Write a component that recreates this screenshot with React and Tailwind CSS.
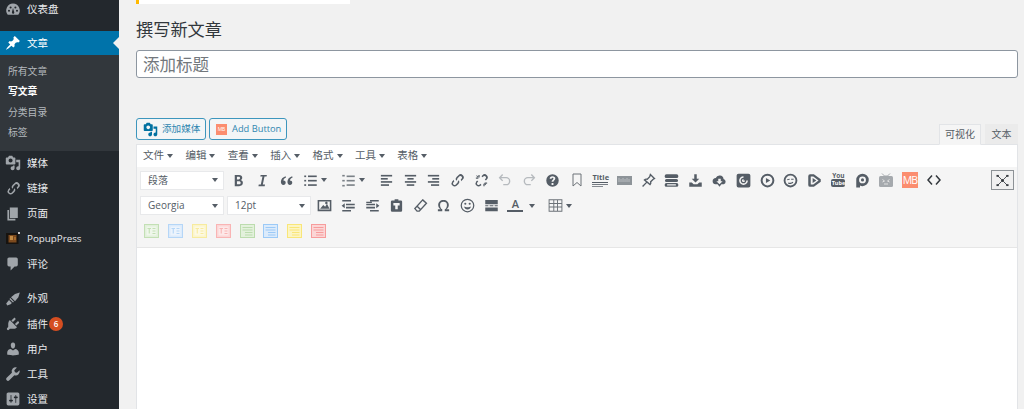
import React from "react";

const CJK = "font-['Open_Sans','Noto_Sans_CJK_SC',sans-serif]";

// small svg wrapper, 24 unit box
const Ico = ({ size = 15, box = 24, className = "", children }) => (
  <svg viewBox={`0 0 ${box} ${box}`} width={size} height={size} className={className} fill="currentColor">
    {children}
  </svg>
);

const Lines = ({ rows, w = 2.6 }) => (
  <g>
    {rows.map(([x1, x2, y], i) => (
      <rect key={i} x={x1} y={y} width={x2 - x1} height={w} />
    ))}
  </g>
);

const linkPath =
  "M20.500 3.500a5 5 0 0 0-7 0l-3 3a5 5 0 0 0-.8 6l1.800-1.800a2.500 2.500 0 0 1 .7-2.500l3-3a2.500 2.500 0 0 1 3.500 3.500l-1.500 1.500c.4 1 .5 2 .4 3l2.900-2.800a5 5 0 0 0 0-7zM14.300 11.400l-1.800 1.800a2.500 2.500 0 0 1-.7 2.500l-3 3a2.500 2.500 0 0 1-3.500-3.500l1.500-1.500a6 6 0 0 1-.4-3l-2.900 2.800a5 5 0 0 0 7 7l3-3a5 5 0 0 0 .8-6z";

const mediaPath =
  "M13 11V4c0-.55-.45-1-1-1h-1.670L9 1H5L3.670 3H2c-.55 0-1 .45-1 1v7c0 .55.45 1 1 1h10c.55 0 1-.45 1-1zM7 4.500c1.380 0 2.500 1.120 2.500 2.500S8.380 9.500 7 9.500 4.500 8.380 4.500 7 5.620 4.500 7 4.500zM14 6h5v10.500c0 1.380-1.120 2.500-2.500 2.500S14 17.880 14 16.500s1.120-2.500 2.500-2.500c.17 0 .34.02.5.050V9h-3V6zm-4 8.050V13h2v3.500c0 1.380-1.120 2.500-2.500 2.500S7 17.880 7 16.500 8.120 14 9.500 14c.17 0 .34.02.5.050z";

// dashicons style glyphs, 20 unit box
const sideIcons = {
  dash: (
    <path
      fillRule="evenodd"
      d="M10 2a8.500 8.500 0 0 0-6.600 13.800h13.200A8.500 8.500 0 0 0 10 2zM5 12.300a1.300 1.300 0 1 1 0-2.600 1.300 1.300 0 0 1 0 2.600zm2-4.200a1.300 1.300 0 1 1 0-2.600 1.300 1.300 0 0 1 0 2.600zm4.200 6.300a1.700 1.700 0 0 1-2.500-2L10 7.500l1.500 5a1.700 1.700 0 0 1-.3 1.900zM13 8.100a1.300 1.300 0 1 1 0-2.600 1.300 1.300 0 0 1 0 2.600zm2 4.200a1.300 1.300 0 1 1 0-2.600 1.300 1.300 0 0 1 0 2.600z"
    />
  ),
  pin: (
    <path d="M10.440 3.020l1.820-1.820 6.360 6.350-1.830 1.820c-1.050-.68-2.480-.57-3.410.36l-.75.750c-.92.930-1.040 2.350-.35 3.410l-1.830 1.820-2.410-2.410-2.800 2.790c-.42.42-3.380 2.710-3.800 2.290s1.860-3.390 2.280-3.810l2.790-2.790L4.100 9.360l1.830-1.820c1.050.69 2.480.57 3.400-.36l.75-.75c.93-.92 1.050-2.350.36-3.410z" />
  ),
  media: <path fillRule="evenodd" d={mediaPath} />,
  page: <path d="M6 15V2h10v13H6zm-1 1h8v2H3V5h2v11z" />,
  comment: <path d="M5 2h9c1.100 0 2 .9 2 2v7c0 1.100-.9 2-2 2h-2l-5 5v-5H5c-1.100 0-2-.9-2-2V4c0-1.100.9-2 2-2z" />,
  brush: <path d="M18.500 2l-6 1.700-5 4.200 5 5 4.200-5zM6.700 8.800l-1.200 1.200 4.500 4.500 1.200-1.200zM5 11.300l-3.500 4.200 1.300 2.500 4.200-1.300 1.600-1.600z" />,
  plugin: (
    <path d="M13.110 4.360L9.870 7.600 8 5.730l3.240-3.240c.35-.34 1.050-.2 1.560.32.52.51.66 1.210.31 1.550zm-8 1.770l.91-1.120 9.010 9.010-1.190.84c-.71.71-2.630 1.160-3.820 1.160H6.140L4.900 17.260c-.59.59-1.540.59-2.120 0-.59-.58-.59-1.530 0-2.120l1.240-1.240v-3.880c0-1.130.4-3.190 1.090-3.890zm7.260 3.970l3.240-3.240c.34-.35 1.040-.21 1.550.31.52.51.66 1.210.31 1.550l-3.240 3.250z" />
  ),
  user: (
    <path d="M10 9.250c-2.270 0-2.730-3.440-2.730-3.440C7 4.020 7.820 2 9.970 2c2.160 0 2.980 2.020 2.710 3.810 0 0-.41 3.440-2.680 3.440zm0 2.570L12.720 10c2.390 0 4.520 2.330 4.520 4.530v2.490s-3.650 1.130-7.240 1.130c-3.650 0-7.240-1.130-7.240-1.130v-2.490c0-2.250 1.940-4.480 4.470-4.480z" />
  ),
  tool: <path d="M18.200 5.200l-3.300 3.300-2.500-.8-.8-2.500 3.300-3.300a5 5 0 0 0-6.300 6.500L2.100 14.600a2.300 2.300 0 0 0 3.300 3.300l6.300-6.400a5 5 0 0 0 6.500-6.300z" />,
  settings: (
    <path
      fillRule="evenodd"
      d="M18 16V4c0-1.100-.9-2-2-2H4c-1.100 0-2 .9-2 2v12c0 1.100.9 2 2 2h12c1.100 0 2-.9 2-2zM8 11h1c.55 0 1 .45 1 1s-.45 1-1 1H8v1.500c0 .28-.22.5-.5.5s-.5-.22-.5-.5V13H6c-.55 0-1-.45-1-1s.45-1 1-1h1V5.500c0-.28.22-.5.5-.5s.5.22.5.5V11zm5-2h-1c-.55 0-1-.45-1-1s.45-1 1-1h1V5.500c0-.28.22-.5.5-.5s.5.22.5.5V7h1c.55 0 1 .45 1 1s-.45 1-1 1h-1v5.500c0 .28-.22.5-.5.5s-.5-.22-.5-.5V9z"
    />
  ),
};

const SideRow = ({ icon, label, custom, badge, latin, h = "h-[25.200px]" }) => (
  <div className={`flex items-center ${h} text-[#e9ebed]`}>
    <span className="w-[27px] flex justify-center pr-[1px] text-[#a0a5aa]">
      {custom ||
        (icon === "link" ? (
          <Ico size={15}><path fillRule="evenodd" d={linkPath} /></Ico>
        ) : (
          <Ico size={16} box={20}>{sideIcons[icon]}</Ico>
        ))}
    </span>
    <span className={`${latin ? "text-[9.800px]" : "text-[10.500px]"} leading-none`}>{label}</span>
    {badge && (
      <span className="ml-[1px] w-[14px] h-[14px] rounded-full bg-[#d54e21] text-white text-[8px] font-semibold flex items-center justify-center">
        {badge}
      </span>
    )}
  </div>
);

const PopupIcon = (
  <svg width="14" height="13" viewBox="0 0 14 13">
    <rect x="0" y="1" width="12.500" height="11" fill="#17130f" />
    <rect x="2.500" y="3" width="8" height="7.500" fill="#7c4a1e" />
    <rect x="4" y="4" width="3" height="4" fill="#c08a45" />
    <rect x="8" y="5" width="2" height="3" fill="#a56a2c" />
    <rect x="12" y="0" width="2" height="2" fill="#c9c9c9" />
  </svg>
);

const Sidebar = () => (
  <aside className="w-[119px] shrink-0 bg-[#23282d] overflow-hidden">
    <div className="-mt-[3px]">
      <SideRow icon="dash" label="仪表盘" h="h-[25px]" />
    </div>
    <div className="relative mt-[9px] h-[24px] bg-[#0073aa] flex items-center text-white">
      <span className="w-[27px] flex justify-center pr-[1px]">
        <Ico size={16} box={20}>{sideIcons.pin}</Ico>
      </span>
      <span className="text-[10.500px] leading-none">文章</span>
      <span className="absolute right-0 top-[6px] border-y-[6px] border-r-[6px] border-y-transparent border-r-[#f1f1f1]" />
    </div>
    <div className="bg-[#32373c] py-[7px] text-[9.800px] text-[#b4b9be]">
      <div className="h-[20.400px] flex items-center pl-[8px]">所有文章</div>
      <div className="h-[20.400px] flex items-center pl-[8px] text-white font-semibold">写文章</div>
      <div className="h-[20.400px] flex items-center pl-[8px]">分类目录</div>
      <div className="h-[20.400px] flex items-center pl-[8px]">标签</div>
    </div>
    <SideRow icon="media" label="媒体" />
    <SideRow icon="link" label="链接" />
    <SideRow icon="page" label="页面" />
    <SideRow custom={PopupIcon} label="PopupPress" latin />
    <SideRow icon="comment" label="评论" />
    <div className="h-[9.500px]" />
    <SideRow icon="brush" label="外观" />
    <SideRow icon="plugin" label="插件" badge="6" />
    <SideRow icon="user" label="用户" />
    <SideRow icon="tool" label="工具" />
    <SideRow icon="settings" label="设置" />
  </aside>
);

const Caret = ({ className = "" }) => (
  <span className={`inline-block border-x-[3.500px] border-t-[4px] border-x-transparent border-t-[#555d66] ${className}`} />
);

const toolIcons = {
  bold: <path d="M6 3h7c3 0 5 1.600 5 4.400 0 1.800-1 3.200-2.500 3.900C17.600 11.900 19 13.500 19 15.700 19 19 16.600 21 13 21H6zm3.500 3v4.200H12c1.500 0 2.500-.7 2.500-2.100S13.500 6 12 6zm0 7v5H12.500c1.800 0 3-.9 3-2.500S14.300 13 12.500 13z" />,
  italic: <path d="M9 3h10l-.5 2.500h-3.300L12.500 18.500H16L15.500 21h-10l.5-2.500h3.300L12 5.500H8.500z" />,
  quote: <path d="M10.500 5C6 6.500 3 9.500 3 14c0 3 1.500 5 4 5s3.700-1.700 3.700-3.700S9.300 12 7 12c.3-2 1.800-3.500 4.300-4.700zM21 5c-4.500 1.500-7.500 4.500-7.500 9 0 3 1.500 5 4 5s3.700-1.700 3.700-3.700-1.400-3.300-3.700-3.300c.3-2 1.800-3.500 4.300-4.700z" />,
  ul: <Lines rows={[[2, 5, 4], [8, 22, 4], [2, 5, 11], [8, 22, 11], [2, 5, 18], [8, 22, 18]]} />,
  ol: <Lines rows={[[2, 6, 3], [9, 22, 4], [2, 6, 11], [9, 22, 11], [2, 6, 19], [9, 22, 18]]} />,
  left: <Lines rows={[[3, 21, 3], [3, 14, 8], [3, 21, 13], [3, 16, 18]]} />,
  center: <Lines rows={[[3, 21, 3], [7, 17, 8], [3, 21, 13], [6, 18, 18]]} />,
  right: <Lines rows={[[3, 21, 3], [10, 21, 8], [3, 21, 13], [8, 21, 18]]} />,
  link: <path fillRule="evenodd" d={linkPath} />,
  unlink: (
    <path d="M20.500 3.500a5 5 0 0 0-7 0L12 5l1.800 1.800L15.300 5.300a2.500 2.500 0 0 1 3.500 3.500L17.300 10.300 19 12l1.500-1.500a5 5 0 0 0 0-7zM5 12L3.500 13.500a5 5 0 0 0 7 7L12 19l-1.800-1.800-1.500 1.500a2.500 2.500 0 0 1-3.500-3.500L6.800 13.700zM3 7h4v2H3zM7 3h2v4H7zM17 15h4v2h-4zM15 17h2v4h-2zM4.500 3.500l2.500 2.500-1 1-2.500-2.500zM17 16l2.500 2.500-1 1L16 17z" />
  ),
  help: <path fillRule="evenodd" d="M12 2a10 10 0 1 1 0 20 10 10 0 0 1 0-20zm-1.500 14v3h3v-3zM12 5c-3 0-4.500 1.800-4.500 4h3c0-.8.500-1.300 1.500-1.300s1.500.5 1.500 1.300c0 1.500-3 2-3 5h3c0-2 3-2.500 3-5.500C16.500 6.500 14.800 5 12 5z" />,
  pin: <path fill="none" stroke="currentColor" strokeWidth="2.200" d="M15 2.500l6.500 6.500-2 1-4 4c.5 2 0 3.500-1 4.500L5.500 11c1-1 2.500-1.500 4.500-1l4-4zM9 15l-6.500 6.500" />,
  stack: (
    <path fillRule="evenodd" d="M4 2h16a2 2 0 0 1 0 6H4a2 2 0 0 1 0-6zm0 7.500h16a2.500 2.500 0 0 1 0 5H4a2.500 2.500 0 0 1 0-5zM4 16h16a3 3 0 0 1 0 6H4a3 3 0 0 1 0-6zm1 2v2h14v-2z" />
  ),
  download: <path d="M10 2h4v7h4l-6 6-6-6h4zM2 15h4l3 3h6l3-3h4v7H2z" />,
  cloud: <path d="M18.500 9.500A6.500 6.500 0 0 0 6 8a5 5 0 0 0-5 5.500C1 16 3 18 5.500 18H9l3 4 3-4h4a4.500 4.500 0 0 0-.500-8.500zM10 9h4v4h3l-5 5-5-5h3z" />,
  target: (
    <path fillRule="evenodd" d="M4 1h16a3 3 0 0 1 3 3v16a3 3 0 0 1-3 3H4a3 3 0 0 1-3-3V4a3 3 0 0 1 3-3zm8 4a7 7 0 1 0 7 7h-2.500A4.500 4.500 0 1 1 12 7.500zm0 4.500a2.500 2.500 0 1 0 2.500 2.500H12z" />
  ),
  play: <path fillRule="evenodd" d="M12 1a11 11 0 1 1 0 22 11 11 0 0 1 0-22zm0 3.200a7.800 7.800 0 1 0 0 15.600 7.800 7.800 0 0 0 0-15.600zM9.500 8l7 4-7 4z" />,
  smile2: (
    <path fillRule="evenodd" d="M12 1a11 11 0 1 1 0 22 11 11 0 0 1 0-22zm0 3a8 8 0 1 0 0 16 8 8 0 0 0 0-16zM6.500 10l4-1 .5 1.500-4 1zM13 9h4v1.800h-4zM8.500 15c2 1 5 1 7-1l1 1.200c-2.500 2.800-6 2.800-8.500 1.500z" />
  ),
  play2: (
    <path fillRule="evenodd" d="M5 2h6l11 8v4L11 22H5a3 3 0 0 1-3-3V5a3 3 0 0 1 3-3zm1 3.500v13h4l8.500-6.500L10 5.500zm3 2.500l6 4-6 4z" />
  ),
  p: <path fillRule="evenodd" d="M12 1a10 10 0 0 1 0 20c-1.500 0-3-.4-4-1v3H2V11A10 10 0 0 1 12 1zm0 4.500a5.500 5.500 0 1 0 0 11 5.500 5.500 0 0 0 0-11zm0 3a2.500 2.500 0 1 1 0 5 2.500 2.500 0 0 1 0-5z" />,
  image: (
    <path fillRule="evenodd" d="M1 3h22v18H1zm2.500 2.500v13h17v-13zM5 17l5-6 3 3 3-5 4 8zM15 6a2 2 0 1 1 0 4 2 2 0 0 1 0-4z" />
  ),
  indent: <path d="M8 3h14v2.600H8zM2 9h14v2.600H2zM2 14h14v2.600H2zM8 19h14v2.600H8zM11 6v2H2V6zM23 12.500l-5-4v8z" />,
  outdent: <path d="M2 3h14v2.600H2zM8 9h14v2.600H8zM8 14h14v2.600H8zM2 19h14v2.600H2zM1 12.500l5-4v8z" />,
  paste: <path fillRule="evenodd" d="M9 2h6v2h4a2 2 0 0 1 2 2v14a2 2 0 0 1-2 2H5a2 2 0 0 1-2-2V6a2 2 0 0 1 2-2h4zm-2 6v4h3v6h4v-6h3V8z" />,
  eraser: <path fill="none" stroke="currentColor" strokeWidth="2.200" d="M15.500 3l6 5.500L10 21H6.500L3 17zM7 13.500l5 5" />,
  omega: <path d="M12 3c5 0 8.500 3.300 8.500 8 0 3-1.500 5.500-4 7H21v3h-7v-3c2.500-1.200 3.500-4 3.500-7 0-3-2-5-5.500-5S6.500 8 6.500 11c0 3 1 5.800 3.500 7v3H3v-3h4.500c-2.500-1.500-4-4-4-7 0-4.700 3.500-8 8.500-8z" />,
  smile: (
    <path fillRule="evenodd" d="M12 1a11 11 0 1 1 0 22 11 11 0 0 1 0-22zm0 2a9 9 0 1 0 0 18 9 9 0 0 0 0-18zM8.500 7.500a1.700 1.700 0 1 1 0 3.400 1.700 1.700 0 0 1 0-3.400zm7 0a1.700 1.700 0 1 1 0 3.400 1.700 1.700 0 0 1 0-3.400zM6.500 13.500c2.500 1.500 8.500 1.500 11 0-.5 3-3 4.800-5.500 4.800s-5-1.800-5.500-4.800z" />
  ),
  hr: <path d="M2 3h20v7H2zM2 11.500h5v1.500H2zM9 11.500h6v1.500H9zM17 11.500h5v1.500h-5zM2 15h20v6H2z" />,
  table: <path fillRule="evenodd" d="M1 2h22v20H1zm1.500 1.500v4.500h6V3.500zm7.500 0v4.500h4.500V3.500zm6 0v4.500h5.500V3.500zM2.500 9.500v4h6v-4zm7.500 0v4h4.500v-4zm6 0v4h5.500v-4zM2.500 15v5.500h6V15zm7.500 0v5.500h4.500V15zm6 0v5.500h5.500V15z" />,
};

const Btn = ({ name, caret, wide, tone = "text-[#555d66]", children }) => (
  <span className={`${wide ? "w-[38px]" : "w-[23.800px]"} h-[20px] shrink-0 flex items-center ${tone}`}>
    <span className="w-[23.800px] flex justify-center shrink-0">
      {children || <Ico>{toolIcons[name]}</Ico>}
    </span>
    {caret && <Caret className="-ml-[1px]" />}
  </span>
);

const Select = ({ label }) => (
  <span className="w-[84px] h-[19px] shrink-0 bg-white border border-[#e8e9eb] flex items-center justify-between pl-[7px] pr-[5px] text-[10px] text-[#555d66]">
    {label}
    <Caret />
  </span>
);

const TitleIcon = (
  <span className="w-[16px] flex flex-col items-stretch gap-[1px]">
    <span className="text-[7.500px] leading-[7px] font-bold text-center">Title</span>
    <span className="h-[1px] bg-current" />
    <span className="h-[1px] bg-current opacity-80" />
    <span className="h-[1px] w-[11px] bg-current opacity-70" />
  </span>
);

const KeyboardIcon = (
  <svg width="15" height="9" viewBox="0 0 15 9">
    <rect width="15" height="9" fill="#8e9499" />
    <path d="M2 2v4M4 3v3M6 2v4M8 3v3M10 2v4M12 3v3" stroke="#c5c8cb" strokeWidth="0.800" />
  </svg>
);

const BookmarkIcon = (
  <svg width="10" height="14" viewBox="0 0 10 14" fill="none" stroke="#6c7278" strokeWidth="1">
    <path d="M1 1h8v12L5 9.500 1 13z" />
  </svg>
);

const UndoIcon = ({ flip }) => (
  <svg width="14" height="14" viewBox="0 0 24 24" fill="none" stroke="#b6babe" strokeWidth="2.400" className={flip ? "-scale-x-100" : ""}>
    <path d="M3 8h11a6 6 0 0 1 0 12H9M8 2.500L2.800 8 8 13.500" />
  </svg>
);

const YoutubeIcon = (
  <span className="w-[15px] flex flex-col items-center text-[#555d66]">
    <span className="text-[6.500px] leading-[6px] font-bold">You</span>
    <span className="w-[14px] h-[8px] rounded-[2px] bg-[#555d66] text-white text-[5.500px] leading-[8px] text-center font-bold">Tube</span>
  </span>
);

const TvIcon = (
  <svg width="16" height="15" viewBox="0 0 16 15">
    <path d="M4 0.500L6.500 3h3L12 0.500" stroke="#a5a9ad" strokeWidth="1" fill="none" />
    <rect x="1" y="3" width="14" height="11" rx="1.500" fill="#a5a9ad" />
    <path d="M4.500 6.500l2 1.500-2 1M11.500 6.500l-2 1.500 2 1M6 11h4" stroke="#e8e8e8" strokeWidth="0.900" fill="none" />
  </svg>
);

const MbIcon = ({ small }) => (
  <span
    className={`${small ? "w-[11px] h-[11px] text-[5px]" : "w-[16px] h-[16px] text-[10.500px] tracking-[-1px]"} bg-[#fb8d6f] text-white flex items-center justify-center leading-none font-normal`}
  >
    MB
  </span>
);

const CodeIcon = (
  <svg width="14" height="12" viewBox="0 0 14 12" fill="none" stroke="#32373c" strokeWidth="1.500">
    <path d="M5 1.500L1 6l4 4.500M9 1.500L13 6l-4 4.500" />
  </svg>
);

const AColor = (
  <span className="flex flex-col items-center text-[#555d66] -mt-[1px]">
    <span className="text-[11px] leading-[12px] font-semibold">A</span>
    <span className="w-[16px] h-[1.500px] bg-[#555d66]" />
  </span>
);

// coloured shortcode buttons of the third row
const ColorBtn = ({ c, bg, text }) => (
  <span className="w-[23.800px] shrink-0 flex justify-center">
    <svg width="15" height="14" viewBox="0 0 15 14">
      <rect x="0.500" y="0.500" width="14" height="13" fill={bg} stroke={c} />
      {text ? (
        <g fill={c}>
          <rect x="2.500" y="2.500" width="10" height="9" fill="#fff" opacity="0.450" />
          <path d="M3.500 4h3.500v1H5.800v4.500H4.700V5h-1.200z" />
          <path d="M8.500 4h3v1h-3zM8.500 6.500h3v1h-3zM8.500 9h3v1h-3z" />
        </g>
      ) : (
        <g fill={c}>
          <path d="M2.500 3h10v1h-10zM2.500 5.500h10v1h-10zM5 8h7.500v1H5zM5 10.500h7.500v1H5z" />
        </g>
      )}
    </svg>
  </span>
);

const menus = ["文件", "编辑", "查看", "插入", "格式", "工具", "表格"];

const Editor = () => (
  <div className="border border-[#e2e4e7] border-b-0">
    <div className="h-[22px] bg-white flex items-center pl-[6px] text-[10.500px] text-[#555d66]">
      {menus.map((m) => (
        <span key={m} className="w-[42.400px] shrink-0 flex items-center gap-[3px]">
          {m}
          <Caret />
        </span>
      ))}
    </div>
    <div className="bg-[#f5f5f5] border-b border-[#e6e6e6] h-[81px] pl-[3px] pr-[3px]">
      <div className="flex items-center h-[26px]">
        <Select label="段落" />
        <span className="w-[3px]" />
        <Btn name="bold" />
        <Btn name="italic" />
        <Btn name="quote" />
        <Btn name="ul" caret wide />
        <Btn name="ol" caret wide tone="text-[#7b8187]" />
        <Btn name="left" />
        <Btn name="center" />
        <Btn name="right" />
        <Btn name="link" />
        <Btn name="unlink" />
        <Btn><UndoIcon /></Btn>
        <Btn><UndoIcon flip /></Btn>
        <Btn name="help" />
        <Btn>{BookmarkIcon}</Btn>
        <Btn>{TitleIcon}</Btn>
        <Btn>{KeyboardIcon}</Btn>
        <Btn name="pin" />
        <Btn name="stack" />
        <Btn name="download" />
        <Btn name="cloud" />
        <Btn name="target" />
        <Btn name="play" />
        <Btn name="smile2" />
        <Btn name="play2" />
        <Btn>{YoutubeIcon}</Btn>
        <Btn name="p" />
        <Btn>{TvIcon}</Btn>
        <Btn><MbIcon /></Btn>
        <Btn>{CodeIcon}</Btn>
        <span className="ml-auto w-[23px] h-[20px] border border-[#8d9296] bg-[#f0f0f0] flex items-center justify-center text-[#32373c]">
          <svg width="15" height="13" viewBox="0 0 16 14" fill="none" stroke="currentColor" strokeWidth="0.900">
            <path d="M3 2l3.500 3.500M13 2L9.500 5.500M3 12l3.500-3.500M13 12L9.500 8.500" />
            <rect x="1.500" y="1" width="2.500" height="2" fill="currentColor" stroke="none" />
            <rect x="12" y="1" width="2.500" height="2" fill="currentColor" stroke="none" />
            <rect x="1.500" y="11" width="2.500" height="2" fill="currentColor" stroke="none" />
            <rect x="12" y="11" width="2.500" height="2" fill="currentColor" stroke="none" />
            <rect x="6.500" y="5.500" width="3" height="3" fill="currentColor" stroke="none" />
          </svg>
        </span>
      </div>
      <div className="flex items-center h-[25px]">
        <Select label="Georgia" />
        <span className="w-[3px]" />
        <Select label="12pt" />
        <span className="w-[2px]" />
        <Btn name="image" />
        <Btn name="outdent" />
        <Btn name="indent" />
        <Btn name="paste" />
        <Btn name="eraser" />
        <Btn name="omega" />
        <Btn name="smile" />
        <Btn name="hr" />
        <span className="w-[40px] h-[20px] shrink-0 flex items-center text-[#555d66]">
          <span className="w-[24px] flex justify-center">{AColor}</span>
          <Caret className="ml-[2px]" />
        </span>
        <Btn name="table" caret wide tone="text-[#6c7278]" />
      </div>
      <div className="flex items-center h-[26px]">
        <ColorBtn c="#c3e0b5" bg="#e2f0db" text />
        <ColorBtn c="#b5d6f7" bg="#dcebfb" text />
        <ColorBtn c="#f7eb9f" bg="#fbf5cc" text />
        <ColorBtn c="#f9b4b4" bg="#fbd6d6" text />
        <ColorBtn c="#bcdcae" bg="#e3f1dc" />
        <ColorBtn c="#9ccaf7" bg="#dcebfb" />
        <ColorBtn c="#f9e678" bg="#fcf5c4" />
        <ColorBtn c="#f79c9c" bg="#fbd6d6" />
      </div>
    </div>
    <div className="h-[170px] bg-white" />
  </div>
);

export default function App() {
  return (
    <div className={`flex w-[1024px] h-[409px] overflow-hidden bg-[#f1f1f1] ${CJK}`}>
      <Sidebar />
      <main className="flex-1 min-w-0 pl-[17px] pr-[6px]">
        <div className="w-[214px] h-[4px] bg-white border-l-[3px] border-[#ffb900]" />
        <h1 className="mt-[15px] h-[22px] flex items-center text-[17.200px] text-[#32373c] font-normal leading-none">撰写新文章</h1>
        <div className="mt-[9px] h-[28px] bg-white border border-[#8d96a0] rounded-[3px] flex items-center pl-[6px] pt-[3px] text-[16.500px] text-[#72777c]">
          添加标题
        </div>
        <div className="mt-[40px] flex items-end justify-between h-[26px]">
          <div className="flex gap-[3px] self-start">
            <span className="w-[70px] h-[22px] rounded-[3px] border border-[#3d96bd] bg-[#f3f5f6] text-[#2f86b0] text-[9.600px] flex items-center pl-[6px] gap-[4px]">
              <span className="text-[#0071a1]">
                <Ico size={15} box={20}>{sideIcons.media}</Ico>
              </span>
              添加媒体
            </span>
            <span className="w-[78px] h-[22px] rounded-[3px] border border-[#3d96bd] bg-[#f3f5f6] text-[#2f86b0] text-[9.300px] flex items-center pl-[6px] gap-[5px]">
              <MbIcon small />
              Add Button
            </span>
          </div>
          <div className="flex gap-[4px] text-[10px] text-[#555d66]">
            <span className="w-[42px] h-[21px] -mb-[1px] -ml-[1px] bg-[#f5f5f5] border border-[#e2e4e7] border-b-[#f5f5f5] flex items-center justify-center">可视化</span>
            <span className="w-[33px] h-[20px] bg-[#ebebeb] flex items-center justify-center">文本</span>
          </div>
        </div>
        <Editor />
      </main>
    </div>
  );
}
